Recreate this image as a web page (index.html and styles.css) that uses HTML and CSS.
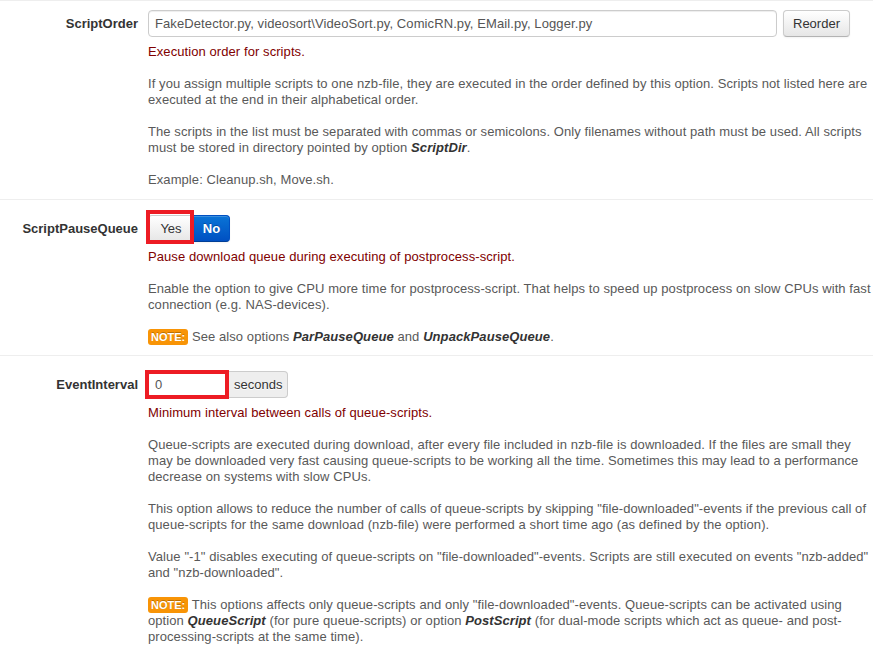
FILE: index.html
```html
<!DOCTYPE html>
<html lang="en">
<head>
    <meta charset="UTF-8">
    <meta name="viewport" content="width=device-width, initial-scale=1.0">
    <title>Settings - Extension Scripts</title>
    <link rel="stylesheet" href="styles.css">
</head>
<body>
    <div class="options">
        <!-- ScriptOrder -->
        <div class="group first">
            <label class="name">ScriptOrder</label>
            <div class="controls">
                <div class="row">
                    <input class="field wide" type="text" value="FakeDetector.py, videosort\VideoSort.py, ComicRN.py, EMail.py, Logger.py">
                    <button class="btn">Reorder</button>
                </div>
                <div class="help">
                    <p class="summary">Execution order for scripts.</p>
                    <p>If you assign multiple scripts to one nzb-file, they are executed in the order defined by this option. Scripts not listed here are executed at the end in their alphabetical order.</p>
                    <p>The scripts in the list must be separated with commas or semicolons. Only filenames without path must be used. All scripts must be stored in directory pointed by option <b><i>ScriptDir</i></b>.</p>
                    <p>Example: Cleanup.sh, Move.sh.</p>
                </div>
            </div>
        </div>

        <!-- ScriptPauseQueue -->
        <div class="group">
            <label class="name">ScriptPauseQueue</label>
            <div class="controls">
                <div class="row">
                    <div class="toggle">
                        <span class="mark mark-yes"><button class="btn btn-left">Yes</button></span>
                        <button class="btn btn-right btn-primary">No</button>
                    </div>
                </div>
                <div class="help">
                    <p class="summary">Pause download queue during executing of postprocess-script.</p>
                    <p>Enable the option to give CPU more time for postprocess-script. That helps to speed up postprocess on slow CPUs with fast connection (e.g. NAS-devices).</p>
                    <p><span class="note">NOTE:</span> See also options <b><i>ParPauseQueue</i></b> and <b><i>UnpackPauseQueue</i></b>.</p>
                </div>
            </div>
        </div>

        <!-- EventInterval -->
        <div class="group">
            <label class="name">EventInterval</label>
            <div class="controls">
                <div class="row">
                    <div class="append">
                        <span class="mark mark-field"><input class="field small" type="text" value="0"></span>
                        <span class="addon">seconds</span>
                    </div>
                </div>
                <div class="help">
                    <p class="summary">Minimum interval between calls of queue-scripts.</p>
                    <p>Queue-scripts are executed during download, after every file included in nzb-file is downloaded. If the files are small they may be downloaded very fast causing queue-scripts to be working all the time. Sometimes this may lead to a performance decrease on systems with slow CPUs.</p>
                    <p>This option allows to reduce the number of calls of queue-scripts by skipping "file-downloaded"-events if the previous call of queue-scripts for the same download (nzb-file) were performed a short time ago (as defined by the option).</p>
                    <p>Value "-1" disables executing of queue-scripts on "file-downloaded"-events. Scripts are still executed on events "nzb-added" and "nzb-downloaded".</p>
                    <p><span class="note">NOTE:</span> This options affects only queue-scripts and only "file-downloaded"-events. Queue-scripts can be activated using option <b><i>QueueScript</i></b> (for pure queue-scripts) or option <b><i>PostScript</i></b> (for dual-mode scripts which act as queue- and post-processing-scripts at the same time).</p>
                </div>
            </div>
        </div>
    </div>
</body>
</html>
```

FILE: styles.css
```css
body {
    font-family: "Liberation Sans", Arial, sans-serif;
    font-size: 13px;
    line-height: 16px;
    color: #595959;
    margin: 0;
    padding: 0;
    background: #ffffff;
}
.options {
    width: 873px;
}
.group {
    display: grid;
    grid-template-columns: 138px 1fr;
    column-gap: 10px;
    border-top: 1px solid #eeeeee;
    padding: 15px 0 10px;
}
.group.first {
    padding: 9px 0 11px;
}
.name {
    font-weight: bold;
    color: #333333;
    text-align: right;
    padding-top: 6px;
}
.row {
    display: flex;
    gap: 6px;
    height: 27px;
}
.field {
    box-sizing: border-box;
    height: 27px;
    padding: 0 6px;
    font-family: inherit;
    font-size: 13px;
    letter-spacing: 0.1px;
    color: #555555;
    border: 1px solid #cccccc;
    border-radius: 4px;
    box-shadow: inset 0 1px 1px rgba(0, 0, 0, 0.075);
    background: #ffffff;
}
.field.wide {
    width: 629px;
}
.field.small {
    width: 81px;
    border-radius: 4px 0 0 4px;
    display: block;
}
.btn {
    box-sizing: border-box;
    height: 27px;
    padding: 0 9px;
    font-family: inherit;
    font-size: 13px;
    color: #333333;
    background-color: #f5f5f5;
    background-image: linear-gradient(to bottom, #ffffff, #e6e6e6);
    border: 1px solid #cccccc;
    border-bottom-color: #b3b3b3;
    border-radius: 4px;
    box-shadow: inset 0 1px 0 rgba(255, 255, 255, 0.2), 0 1px 2px rgba(0, 0, 0, 0.05);
}
.toggle {
    display: flex;
}
.btn-left {
    display: block;
    width: 46px;
    padding: 0;
    border-radius: 4px 0 0 4px;
}
.btn-right {
    width: 36px;
    padding: 0;
    border-radius: 0 4px 4px 0;
    border-left: 0;
}
.btn-primary {
    color: #ffffff;
    font-weight: bold;
    text-shadow: 0 -1px 0 rgba(0, 0, 0, 0.25);
    background-color: #0062cc;
    background-image: linear-gradient(to bottom, #0a74d6, #0050c2);
    border-color: #0050c2 #0050c2 #003e96;
}
.append {
    display: flex;
}
.addon {
    box-sizing: border-box;
    height: 27px;
    padding: 0 5px;
    line-height: 25px;
    color: #333333;
    background: #eeeeee;
    border: 1px solid #cccccc;
    border-left: 0;
    border-radius: 0 4px 4px 0;
    text-shadow: 0 1px 0 #ffffff;
}
.mark {
    position: relative;
    display: block;
}
.mark::after {
    content: "";
    position: absolute;
    border: 4px solid #ed1c24;
    pointer-events: none;
}
.mark-yes::after {
    top: -5px;
    bottom: -2px;
    left: -2px;
    right: 0;
}
.mark-field::after {
    top: -1px;
    bottom: -1px;
    left: -3px;
    right: 0;
}
.help {
    margin-top: 7px;
    letter-spacing: 0.08px;
}
.help p {
    margin: 0 0 16px;
}
.help p:last-child {
    margin-bottom: 0;
}
.help .summary {
    color: #800000;
}
.help b {
    color: #333333;
}
.note {
    padding: 2px 3px;
    font-size: 11px;
    font-weight: bold;
    letter-spacing: 0;
    color: #ffffff;
    background-color: #f89406;
    border-radius: 3px;
    text-shadow: 0 -1px 0 rgba(0, 0, 0, 0.25);
}
```
